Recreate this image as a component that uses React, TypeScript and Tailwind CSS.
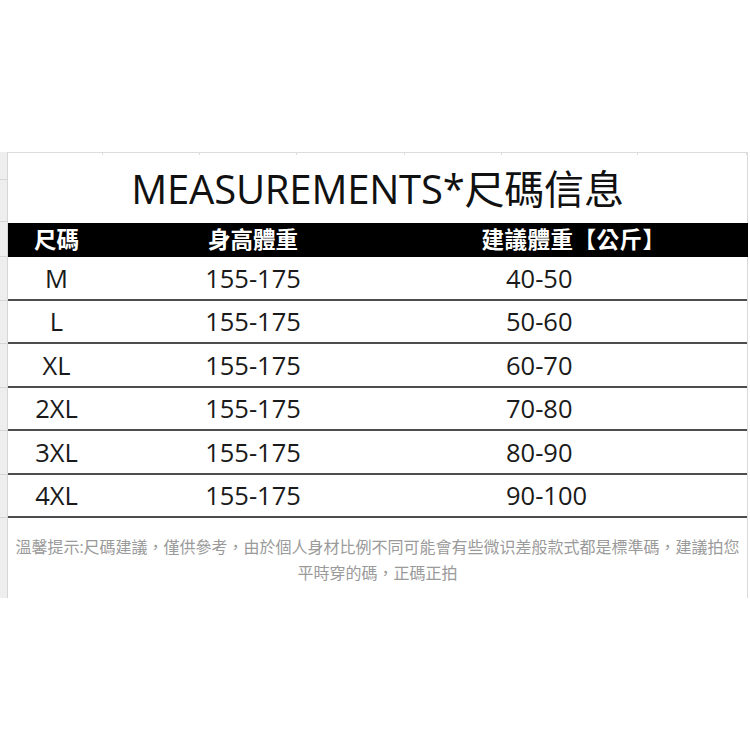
import React from 'react';

const rows = [
  { size: 'M', height: '155-175', weight: '40-50' },
  { size: 'L', height: '155-175', weight: '50-60' },
  { size: 'XL', height: '155-175', weight: '60-70' },
  { size: '2XL', height: '155-175', weight: '70-80' },
  { size: '3XL', height: '155-175', weight: '80-90' },
  { size: '4XL', height: '155-175', weight: '90-100' },
];

const ticks = [95, 97, 97, 108, 97, 136, 109];

export default function App() {
  return (
    <div
      className="w-[750px] h-[750px] bg-white pt-[152px]"
      style={{ fontFamily: '"Open Sans", "Noto Sans CJK TC", sans-serif' }}
    >
      <div className="flex h-[446px]">
        {/* row header strip */}
        <div className="w-[8px] bg-[#eeeeee] border-r border-[#d6d6d6] flex flex-col">
          <div className="h-[28px] border-b border-[#d6d6d6]" />
          <div className="h-[42px] border-b border-[#d6d6d6]" />
          <div className="h-[35px] border-b border-[#d6d6d6]" />
          {rows.map((r) => (
            <div key={r.size} className="h-[43.5px] border-b border-[#d6d6d6]" />
          ))}
          <div className="flex-1" />
        </div>

        <div className="w-[740px] border-r border-[#dadada] flex flex-col">
          {/* top grid line with column ticks */}
          <div className="flex h-[3px] border-t border-[#dcdcdc]">
            {ticks.map((w, i) => (
              <div key={i} className="border-r border-[#dcdcdc]" style={{ width: w }} />
            ))}
          </div>

          <div className="h-[68px] flex items-center justify-center text-[40px] text-[#111] tracking-[-0.2px]">
            MEASUREMENTS*尺碼信息
          </div>

          <div className="h-[34px] bg-black grid grid-cols-[97px_296px_1fr] items-center text-white font-bold text-[22.5px] -mr-px">
            <div className="text-center">尺碼</div>
            <div className="text-center">身高體重</div>
            <div className="text-center pr-[2px] tracking-[0.5px]">建議體重【公斤】</div>
          </div>

          {rows.map((r) => (
            <div
              key={r.size}
              className="h-[43.5px] grid grid-cols-[97px_296px_1fr] items-center border-b-2 border-[#4d4d4d] text-[25.5px] text-[#1a1a1a]"
            >
              <div className="text-center">{r.size}</div>
              <div className="text-center">{r.height}</div>
              <div className="pl-[105px]">{r.weight}</div>
            </div>
          ))}

          <div className="flex-1 pt-[16px] text-center text-[16px] leading-[26px] text-[#9a9a9a]">
            溫馨提示:尺碼建議，僅供參考，由於個人身材比例不同可能會有些微识差般款式都是標準碼，建議拍您
            <br />
            平時穿的碼，正碼正拍
          </div>
        </div>
      </div>
    </div>
  );
}
